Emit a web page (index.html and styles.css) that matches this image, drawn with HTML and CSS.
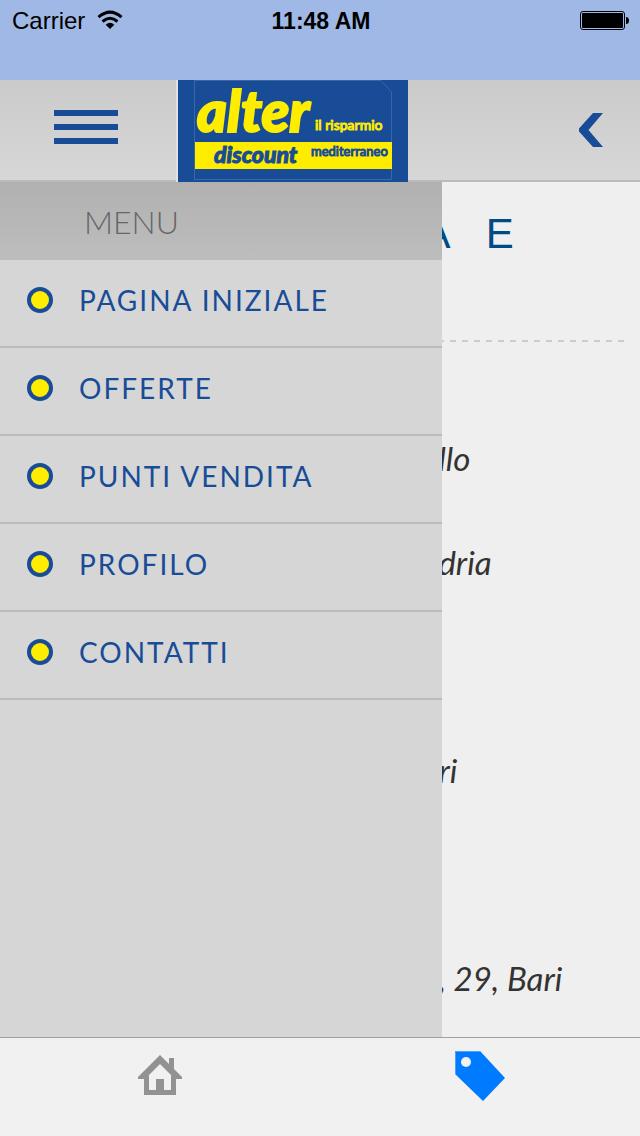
FILE: index.html
```html
<!DOCTYPE html>
<html lang="it">
<head>
  <meta charset="UTF-8">
  <meta name="viewport" content="width=device-width, initial-scale=1">
  <title>Menu</title>
  <link rel="stylesheet" href="styles.css">
</head>
<body>
  <div class="status-bar">
    <div class="carrier">
      <span>Carrier</span>
      <svg width="26" height="20" viewBox="0 0 26 20">
        <path d="M1.500 7.200 Q13 -3 24.500 7.200" fill="none" stroke="#000" stroke-width="3"/>
        <path d="M5.500 11.500 Q13 5 20.500 11.500" fill="none" stroke="#000" stroke-width="3"/>
        <path d="M8.700 14.800 Q13 10.500 17.300 14.800 L13 19 Z"/>
      </svg>
    </div>
    <div class="clock">11:48 AM</div>
    <svg class="battery" width="50" height="20" viewBox="0 0 50 20">
      <rect x="0.500" y="1.500" width="44" height="18" rx="2.500" fill="none" stroke="#000"/>
      <rect x="2" y="3" width="41" height="15" rx="1"/>
      <path d="M46 7 Q49 7 49 10.500 Q49 14 46 14 Z"/>
    </svg>
  </div>

  <header class="header">
    <button class="menu-button" type="button" aria-label="Menu">
      <span></span>
      <span></span>
      <span></span>
    </button>
    <a class="logo" href="#">
      <svg width="230" height="102" viewBox="0 0 230 102">
        <path d="M16.500 0.500 H203 L213.500 12 V99.500 H16.500 Z" fill="none" stroke="#3a67a5" stroke-width="1"/>
        <rect x="17" y="62" width="197" height="27" fill="#ffed00"/>
        <text class="logo-name" x="19" y="52">alter</text>
        <text class="logo-claim" x="137" y="50">il risparmio</text>
        <text class="logo-type" x="36" y="83">discount</text>
        <text class="logo-area" x="133" y="76">mediterraneo</text>
      </svg>
    </a>
    <button class="back-button" type="button" aria-label="Indietro">
      <svg width="26" height="36" viewBox="0 0 26 36">
        <path d="M15 1 H25 L10.500 18 L25 35 H15 L1 19.500 V16.500 Z" fill="#184c97"/>
      </svg>
    </button>
  </header>

  <div class="page">
    <main class="content">
      <h1>A E</h1>
      <hr>
      <ul class="stores">
        <li>llo</li>
        <li class="wide">dria</li>
        <li class="wide">ri</li>
        <li>, 29, Bari</li>
      </ul>
    </main>

    <nav class="menu">
      <h2>MENU</h2>
      <ul>
        <li><a href="#">PAGINA INIZIALE</a></li>
        <li><a href="#">OFFERTE</a></li>
        <li><a href="#">PUNTI VENDITA</a></li>
        <li><a href="#">PROFILO</a></li>
        <li><a href="#">CONTATTI</a></li>
      </ul>
    </nav>
  </div>

  <footer class="tabs">
    <a href="#" aria-label="Home">
      <svg width="44" height="42" viewBox="0 0 44 42">
        <path fill-rule="evenodd" fill="#929292" d="M22 0 L31 9 V3 H36 V14 L44 22 V24 H38 V40 H6 V24 H0 V22 Z M22 9 L11 20 V35 H18 V24 H26 V35 H33 V20 Z"/>
      </svg>
    </a>
    <a href="#" aria-label="Offerte">
      <svg width="50" height="50" viewBox="0 0 50 50">
        <path d="M0 0 H25 L50 27 L28 50 L0 23 Z" fill="#007aff"/>
        <path d="M0.500 23 V0.500 H25" fill="none" stroke="#4da2ff"/>
        <circle cx="11" cy="11" r="5" fill="#f1f1f1"/>
      </svg>
    </a>
  </footer>
</body>
</html>
```
FILE: styles.css
```css
*,
*::before {
  box-sizing: border-box;
}

body {
  margin: 0;
  min-height: 100vh;
  display: flex;
  flex-direction: column;
  font-family: Lato, sans-serif;
  background: #efefef;
}

ul {
  list-style: none;
  margin: 0;
  padding: 0;
}

button {
  border: none;
  padding: 0;
  background: none;
  cursor: pointer;
}

svg {
  display: block;
  overflow: visible;
}

/* status bar */
.status-bar {
  display: grid;
  grid-template-columns: 1fr auto 1fr;
  align-items: start;
  height: 80px;
  padding: 10px 10px 0 12px;
  background: #a0b8e6;
  font-family: "Liberation Sans", Arial, sans-serif;
  font-size: 24px;
  line-height: 22px;
  color: #000;
}

.carrier {
  display: flex;
  gap: 12px;
}

.clock {
  font-size: 23px;
  font-weight: bold;
}

.battery {
  justify-self: end;
}

/* header */
.header {
  display: flex;
  align-items: center;
  height: 102px;
  padding: 0 36px 0 54px;
  background: linear-gradient(#cbcbcb, #d7d7d7);
  border-bottom: 2px solid #bbb;
}

.menu-button {
  display: flex;
  flex-direction: column;
  gap: 8px;
  width: 64px;
  margin: 0 58px 6px 0;
}

.menu-button span {
  height: 6px;
  background: #184c97;
}

.logo {
  align-self: flex-start;
  border-left: 2px solid #e2e2e2;
  background: #184c97;
}

.logo text {
  font-family: Lato, sans-serif;
  fill: #ffed00;
}

.logo .logo-name {
  font-size: 57px;
  font-weight: 900;
  font-style: italic;
  stroke: #ffed00;
  stroke-width: 2px;
}

.logo .logo-claim {
  font-size: 14px;
  stroke: #ffed00;
  stroke-width: 1px;
}

.logo .logo-type {
  font-size: 23px;
  font-weight: 900;
  font-style: italic;
  fill: #184c97;
  stroke: #184c97;
  stroke-width: 1px;
}

.logo .logo-area {
  font-size: 13px;
  fill: #184c97;
  stroke: #184c97;
  stroke-width: 1px;
}

.back-button {
  margin-left: auto;
}

/* page */
.page {
  position: relative;
  flex: 1;
}

.content {
  padding: 26px 16px 0 66%;
  color: #333;
}

.content h1 {
  margin: 0;
  font-family: "Liberation Sans", Arial, sans-serif;
  font-size: 42px;
  font-weight: normal;
  line-height: 52px;
  letter-spacing: 13px;
  color: #004a86;
}

.content hr {
  height: 2px;
  margin: 80px 0 64px;
  border: none;
  background: repeating-linear-gradient(to left, #ccc 0 6px, transparent 6px 12px);
}

.stores {
  padding-left: 16px;
}

.stores li {
  height: 104px;
  font-size: 33px;
  font-style: italic;
  line-height: 104px;
  white-space: nowrap;
}

.stores .wide {
  height: 208px;
}

/* side menu, lies over the content */
.menu {
  position: absolute;
  top: 0;
  bottom: 0;
  left: 0;
  width: 69%;
  background: #d6d6d6;
}

.menu h2 {
  margin: 0;
  padding: 2px 0 0 84px;
  font-size: 32px;
  font-weight: 300;
  line-height: 76px;
  color: #666;
  background: linear-gradient(#b1b1b1, #bdbdbd);
}

.menu a {
  display: flex;
  align-items: center;
  gap: 26px;
  height: 88px;
  padding: 0 27px 6px;
  border-bottom: 2px solid #bbb;
  font-size: 28px;
  letter-spacing: 2px;
  color: #184c97;
  text-decoration: none;
}

.menu a::before {
  content: "";
  width: 26px;
  height: 26px;
  border: 4px solid #184c97;
  border-radius: 50%;
  background: #ffed00;
}

/* bottom tabs */
.tabs {
  display: flex;
  height: 99px;
  border-top: 1px solid #a0a0a0;
  background: #f1f1f1;
}

.tabs a {
  flex: 1;
  display: flex;
  align-items: center;
  justify-content: center;
  padding-bottom: 22px;
}
```
